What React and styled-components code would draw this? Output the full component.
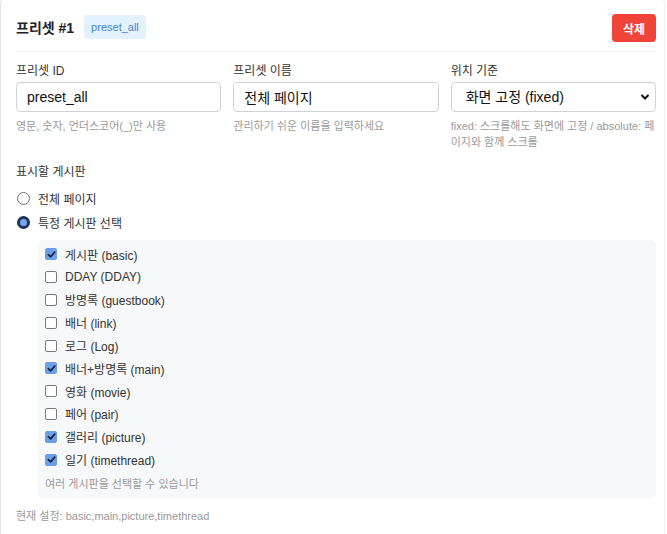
import styled, { createGlobalStyle } from "styled-components";

const GlobalStyle = createGlobalStyle`
  body {
    margin: 0;
    background: #ffffff;
    font-family: "Liberation Sans", "Noto Sans CJK KR", sans-serif;
    color: #222;
  }
`;

const Card = styled.div`
  width: 665px;
  box-sizing: border-box;
  margin-top: -4px;
  padding: 16px 8px 30px 15px;
  border: 1px solid #e3e5e8;
  border-right-color: #f0f1f3;
  border-radius: 8px;
  background: #fff;
`;

const Header = styled.div`
  display: flex;
  align-items: center;
  justify-content: space-between;
  padding: 1px 0 9px;
  border-bottom: 1px solid #eceef0;
`;

const TitleRow = styled.div`
  display: flex;
  align-items: center;
  gap: 10px;
  margin-bottom: 3px;
`;

const Title = styled.h3`
  margin: 0;
  font-size: 14px;
  font-weight: 700;
  color: #222;
`;

const Badge = styled.span`
  padding: 6px 7px;
  border-radius: 4px;
  background: #e3f1fc;
  color: #3f86d6;
  font-size: 11px;
`;

const DeleteButton = styled.button`
  width: 44px;
  height: 28px;
  border: none;
  border-radius: 4px;
  background: #f04438;
  color: #fff;
  font-family: inherit;
  font-size: 12px;
  font-weight: 700;
  cursor: pointer;
`;

const Fields = styled.div`
  display: grid;
  grid-template-columns: 1fr 1fr 1fr;
  column-gap: 12px;
  margin-top: 12px;
`;

const Field = styled.div`
  display: flex;
  flex-direction: column;
`;

const Label = styled.label`
  font-size: 12px;
  color: #333;
  margin-bottom: 3px;
  line-height: 15px;
`;

const inputBase = `
  box-sizing: border-box;
  height: 30px;
  width: 100%;
  border: 1px solid #cfd3d7;
  border-radius: 4px;
  padding: 0 10px;
  font-family: "Liberation Sans", "Noto Sans CJK KR", sans-serif;
  font-size: 14px;
  color: #111;
  background: #fff;
`;

const TextInput = styled.input`
  ${inputBase}
`;

const SelectWrap = styled.div`
  position: relative;
`;

const Select = styled.select`
  ${inputBase}
  appearance: none;
  padding-left: 14px;
`;

const Chevron = styled.svg`
  position: absolute;
  right: 6px;
  top: 10px;
  pointer-events: none;
`;

const Hint = styled.div`
  margin-top: 6px;
  font-size: 11px;
  line-height: 16px;
  color: #9a9a9a;
  word-break: break-all;
`;

const Section = styled.div`
  margin-top: 12px;
`;

const SectionLabel = styled.div`
  font-size: 12px;
  color: #333;
  margin-bottom: 7px;
`;

const RadioRow = styled.label`
  display: flex;
  align-items: center;
  gap: 8px;
  height: 24px;
  font-size: 12px;
  color: #333;
`;

const Radio = styled.input.attrs({ type: "radio" })`
  appearance: none;
  margin: 0 0 0 1px;
  width: 13px;
  height: 13px;
  border-radius: 50%;
  box-sizing: border-box;
  border: 1px solid #767676;
  background: #fff;
  &:checked {
    border: 3px solid #1d3557;
    background: #7aa7ec;
  }
`;

const BoardPanel = styled.div`
  margin: 6px 0 0 22px;
  padding: 3px 8px 6px 7px;
  background: #f7f8fa;
  border-radius: 5px;
`;

const CheckRow = styled.label`
  display: flex;
  align-items: center;
  gap: 8px;
  height: 22.8px;
  font-size: 12px;
  color: #333;
`;

const Box = styled.span`
  box-sizing: border-box;
  width: 12px;
  height: 12px;
  border-radius: 2px;
  border: 1px solid ${(p) => (p.$checked ? "#6d9ee6" : "#7a7a7a")};
  background: ${(p) => (p.$checked ? "#6d9ee6" : "#fff")};
  display: flex;
  align-items: center;
  justify-content: center;
`;

const PanelHint = styled.div`
  font-size: 11px;
  color: #9a9a9a;
  margin-top: 5px;
  line-height: 16px;
`;

const Current = styled.div`
  margin-top: 9px;
  font-size: 11px;
  color: #9a9a9a;
`;

const boards = [
  { label: "게시판 (basic)", checked: true },
  { label: "DDAY (DDAY)", checked: false },
  { label: "방명록 (guestbook)", checked: false },
  { label: "배너 (link)", checked: false },
  { label: "로그 (Log)", checked: false },
  { label: "배너+방명록 (main)", checked: true },
  { label: "영화 (movie)", checked: false },
  { label: "페어 (pair)", checked: false },
  { label: "갤러리 (picture)", checked: true },
  { label: "일기 (timethread)", checked: true },
];

const Check = () => (
  <svg width="9" height="9" viewBox="0 0 10 10">
    <path d="M1.5 5.2 L4 7.6 L8.6 2.4" fill="none" stroke="#14213d" strokeWidth="1.8" strokeLinecap="round" strokeLinejoin="round" />
  </svg>
);

export default function App() {
  return (
    <>
      <GlobalStyle />
      <Card>
        <Header>
          <TitleRow>
            <Title>프리셋 #1</Title>
            <Badge>preset_all</Badge>
          </TitleRow>
          <DeleteButton>삭제</DeleteButton>
        </Header>

        <Fields>
          <Field>
            <Label>프리셋 ID</Label>
            <TextInput defaultValue="preset_all" />
            <Hint>영문, 숫자, 언더스코어(_)만 사용</Hint>
          </Field>
          <Field>
            <Label>프리셋 이름</Label>
            <TextInput defaultValue="전체 페이지" />
            <Hint>관리하기 쉬운 이름을 입력하세요</Hint>
          </Field>
          <Field>
            <Label>위치 기준</Label>
            <SelectWrap>
              <Select defaultValue="fixed">
                <option value="fixed">화면 고정 (fixed)</option>
                <option value="absolute">페이지 기준 (absolute)</option>
              </Select>
              <Chevron width="10" height="10" viewBox="0 0 10 10">
                <path d="M1.5 3 L5 6.5 L8.5 3" fill="none" stroke="#111" strokeWidth="2" />
              </Chevron>
            </SelectWrap>
            <Hint>fixed: 스크롤해도 화면에 고정 / absolute: 페이지와 함께 스크롤</Hint>
          </Field>
        </Fields>

        <Section>
          <SectionLabel>표시할 게시판</SectionLabel>
          <RadioRow>
            <Radio name="scope" />
            전체 페이지
          </RadioRow>
          <RadioRow>
            <Radio name="scope" defaultChecked />
            특정 게시판 선택
          </RadioRow>
          <BoardPanel>
            {boards.map((b) => (
              <CheckRow key={b.label}>
                <Box $checked={b.checked}>{b.checked && <Check />}</Box>
                {b.label}
              </CheckRow>
            ))}
            <PanelHint>여러 게시판을 선택할 수 있습니다</PanelHint>
          </BoardPanel>
          <Current>현재 설정: basic,main,picture,timethread</Current>
        </Section>
      </Card>
    </>
  );
}
